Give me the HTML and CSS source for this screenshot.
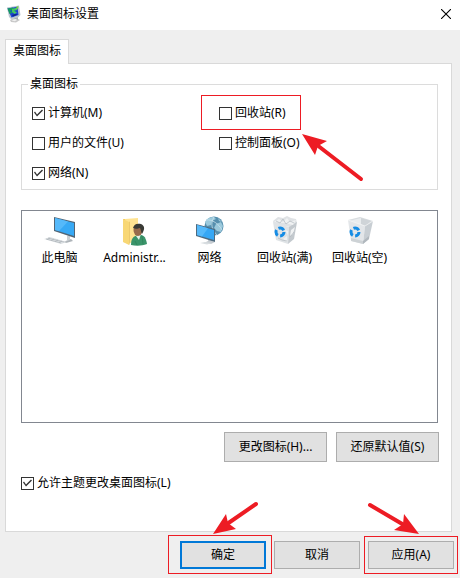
FILE: index.html
```html
<!DOCTYPE html>
<html lang="zh-CN">
<head>
<meta charset="utf-8">
<meta name="viewport" content="width=device-width, initial-scale=1">
<title>桌面图标设置</title>
<link rel="stylesheet" href="styles.css">
</head>
<body>
<main class="dialog">
  <header class="titlebar">
    <svg class="app-icon" viewBox="0 0 16 18" aria-hidden="true">
      <path d="M4 15l5-3 5 3-4 2.500-5-.5z" fill="#c9c9c9"/>
      <path d="M8 12l4-1v4l-3 .5z" fill="#a9adb2"/>
      <path d="M1 2.500L13 .5 14.500 10 12 12.500 5 14 3 12z" fill="#b9c4d0"/>
      <path d="M1.500 3.500l10-1.700L12.500 10l-7 2.500z" fill="#1b43d2"/>
      <path d="M1.500 3.500l5.500-1 1 2-4 1.500L7 7.500 3.500 9z" fill="#159b62"/>
      <path d="M6 4l5.500-1.500-.5 2.500-3 .8 3 1.700-2.500 1.500L6 7z" fill="#43c85f"/>
      <path d="M6 10l3-1 3 .5-5 2z" fill="#102488"/>
      <path d="M10.500 1.500l2-.3-.3 2.300-1.700.5z" fill="#7dd742"/>
      <path d="M5.500 15.200l4-1.200 2 1-3 1.300z" fill="#f1f1f1"/>
    </svg>
    <h1 class="title">桌面图标设置</h1>
    <button class="close" type="button" aria-label="关闭">
      <svg viewBox="0 0 10 10" aria-hidden="true"><path d="M0 0L10 10M10 0L0 10" stroke="#000" stroke-width="1.100"/></svg>
    </button>
  </header>

  <form class="body">
    <div class="tabs" role="tablist">
      <button class="tab" type="button" role="tab" aria-selected="true">桌面图标</button>
    </div>

    <section class="panel">
      <fieldset class="group">
        <legend>桌面图标</legend>
        <div class="options">
          <label class="check"><input type="checkbox" checked>计算机(M)</label>
          <label class="check marked"><input type="checkbox">回收站(R)
            <svg class="arrow arrow-recycle" viewBox="0 0 62 48" aria-hidden="true">
              <path d="M15 11L59 45" stroke="#ed1c24" stroke-width="4" stroke-linecap="round"/>
              <path d="M0 0L25 7L16 12L13 21Z" fill="#ed1c24"/>
            </svg>
          </label>
          <label class="check"><input type="checkbox">用户的文件(U)</label>
          <label class="check"><input type="checkbox">控制面板(O)</label>
          <label class="check"><input type="checkbox" checked>网络(N)</label>
        </div>
      </fieldset>

      <ul class="icons">
        <li class="item">
          <svg viewBox="0 0 32 32" aria-hidden="true">
            <path d="M19 26l8-3 2 2-7 2z" fill="#aeb4b9"/>
            <path d="M23 20l3-1v5l-3 1z" fill="#cbd0d4"/>
            <path d="M10 1l21 5v16L10 15z" fill="#526575"/>
            <path d="M11 2l19 5v13L11 14z" fill="#37a9f5"/>
            <path d="M11 2l13 3.500L15 15l-4-1z" fill="#55b9fa"/>
            <path d="M0 23l6-2 17 5-6 2z" fill="#dde1e4"/>
            <path d="M2 23l15 4M4 22l16 4M6 22l-3 1.500M10 23l-3 1.500M14 24l-3 1.500M18 25l-3 1.500" stroke="#a9b0b5" stroke-width=".6"/>
          </svg>
          <span>此电脑</span>
        </li>
        <li class="item">
          <svg viewBox="0 0 32 32" aria-hidden="true">
            <path d="M4 3h15v23H4z" fill="#f5ca59"/>
            <path d="M6 3l13-1v23l-8 2-7-1z" fill="#ffe391"/>
            <path d="M4 3l6 3v23l-6-3z" fill="#f8d775"/>
            <path d="M10 6l.6-.6V28l-.6 1z" fill="#e0b756"/>
            <path d="M12 29c0-6 2-9 7-10 6-1 8 3 9 9-5 2-11 2-16 1z" fill="#3a946a"/>
            <path d="M17 20l3 4 2-6z" fill="#e5f3e9"/>
            <path d="M16 25l2 4M23 20l1 8" stroke="#2d8058" stroke-width=".7"/>
            <ellipse cx="19" cy="14" rx="4.500" ry="6" fill="#986b4c"/>
            <path d="M14 12c1-4 4-5 8-4 4 2 4 5 1 10-1-2-1-4-2-6-3 1-4 1-7 0z" fill="#393a35"/>
          </svg>
          <span>Administr...</span>
        </li>
        <li class="item">
          <svg viewBox="0 0 32 32" aria-hidden="true">
            <circle cx="20" cy="10" r="9.500" fill="#568fae"/>
            <path d="M11 6c2-4 5-5 9-5l2 2-4 2-1 4-4 1zM22 8l5-2 2 4-2 6-4-1-3-3zM24 2l4 4-3-1z" fill="#9bc9dc"/>
            <path d="M12 4c6-1 13 4 16 10M20 1c-4 7-2 13 3 18" stroke="#d1e8f0" stroke-width=".7"/>
            <path d="M14 21h4v4l3 1-4 2-7-1 4-2z" fill="#c5cbd0"/>
            <path d="M2 8l19 5v13L2 20z" fill="#4e6b80"/>
            <path d="M3 9l17 5v10L3 19z" fill="#35a7f5"/>
            <path d="M3 9l11 3.200L8 20.500 3 19z" fill="#55b9fa"/>
            <path d="M6 27l5-1 7 1-5 1.500z" fill="#d8dde0"/>
          </svg>
          <span>网络</span>
        </li>
        <li class="item">
          <svg viewBox="0 0 32 32" aria-hidden="true">
            <path d="M4 5l5-4 5 1 4-2 4 2 5 1 1 4-7 4L5 8z" fill="#dfe2e5"/>
            <path d="M4 6l16 5-1 17-12-4z" fill="#dfe3e6"/>
            <path d="M20 11l8-5-3 17-6 5z" fill="#c3c9ce"/>
            <path d="M5 6l5-3 4 3 4-4 3 4 6-2-3 5-8-2zM16 14l3 1v4zM22 14l4-3-2 7-3 2zM14 23l4-3v6z" fill="#f0f2f3"/>
            <path d="M7 5l4 2 3-4 3 5 4-3 4 2M9 22l4 2 5 1M21 21l4-5" stroke="#b2b9be" stroke-width=".7"/>
            <circle class="recycle" cx="11" cy="16" r="4"/>
          </svg>
          <span>回收站(满)</span>
        </li>
        <li class="item">
          <svg viewBox="0 0 32 32" aria-hidden="true">
            <path d="M4 4l12-3 13 4-8 6z" fill="#d9dde0"/>
            <path d="M5 5l12-3v6l4 2z" fill="#e9ecee"/>
            <path d="M17 2l10 3-6 5-4-2z" fill="#cfd4d8"/>
            <path d="M4 4l17 6-2 18L7 25z" fill="#e3e6e9"/>
            <path d="M21 10l8-5-4 18-6 5z" fill="#c8ced3"/>
            <path d="M7 22l12 3v3L7 25z" fill="#cdd2d5"/>
            <path d="M19 25l6-5v3l-6 5z" fill="#b1b8be"/>
            <path d="M4 4l17 6 8-5" stroke="#f5f6f7" stroke-width=".7"/>
            <circle class="recycle" cx="11" cy="16" r="4"/>
          </svg>
          <span>回收站(空)</span>
        </li>
      </ul>

      <div class="actions">
        <button class="btn wide" type="button">更改图标(H)...</button>
        <button class="btn wide" type="button">还原默认值(S)</button>
      </div>

      <label class="check"><input type="checkbox" checked>允许主题更改桌面图标(L)</label>
    </section>
  </form>

  <footer class="footer">
    <div class="marked">
      <button class="btn primary" type="button">确定</button>
      <svg class="arrow arrow-ok" viewBox="0 0 48 34" aria-hidden="true">
        <path d="M14 23L43 3" stroke="#ed1c24" stroke-width="4" stroke-linecap="round"/>
        <path d="M0 33L13 13L15 22L23 28Z" fill="#ed1c24"/>
      </svg>
    </div>
    <button class="btn" type="button">取消</button>
    <div class="marked marked-apply">
      <button class="btn" type="button">应用(A)</button>
      <svg class="arrow arrow-apply" viewBox="0 0 54 34" aria-hidden="true">
        <path d="M4 4L38 24" stroke="#ed1c24" stroke-width="4" stroke-linecap="round"/>
        <path d="M53 33L38 13L37 23L28 29Z" fill="#ed1c24"/>
      </svg>
    </div>
  </footer>
</main>
</body>
</html>
```

FILE: styles.css
```css
*,
*::before,
*::after {
  box-sizing: border-box;
}

body {
  margin: 0;
  background: #efefef;
  color: #000;
  font: 12px/18px "Noto Sans", "Noto Sans CJK SC", sans-serif;
}

button,
input {
  font: inherit;
  color: inherit;
}

svg {
  display: block;
  fill: none;
}

.dialog {
  display: flex;
  flex-direction: column;
  min-height: 100vh;
}

/* Title bar */
.titlebar {
  display: flex;
  align-items: center;
  gap: 5px;
  height: 30px;
  padding: 0 9px 2px 6px;
  background: #fff;
}

.app-icon {
  width: 16px;
  height: 18px;
}

.title {
  flex: 1;
  margin: 0;
  font-size: 12px;
  font-weight: 400;
}

.close {
  padding: 0;
  border: 0;
  background: none;
}

.close svg {
  width: 10px;
  height: 10px;
}

/* Tab and its page */
.body {
  padding: 9px 8px 0 5px;
}

.tabs {
  display: flex;
}

.tab {
  position: relative;
  z-index: 1;
  height: 25px;
  margin-bottom: -1px;
  padding: 0 7px 2px;
  border: 1px solid #d9d9d9;
  border-bottom: 0;
  background: #fff;
}

.panel {
  display: flex;
  flex-direction: column;
  padding: 11px 13px 39px 15px;
  border: 1px solid #d9d9d9;
  background: #fff;
}

.group {
  min-width: 0;
  margin: 0 0 20px;
  padding: 10px 10px 1px;
  border: 1px solid #dcdcdc;
}

.group legend {
  margin-left: -4px;
  padding: 0 2px;
}

.options {
  display: grid;
  grid-template-columns: 187fr 208fr;
  grid-auto-rows: 30px;
  margin-top: -5px;
}

.check {
  display: flex;
  align-items: center;
  gap: 3px;
}

.check input {
  appearance: none;
  width: 13px;
  height: 13px;
  margin: 0;
  border: 1px solid #333;
  background: #fff;
}

.check input:checked::before {
  content: "";
  display: block;
  width: 11px;
  height: 11px;
  background: #333;
  clip-path: polygon(1px 5px, 2px 4px, 4px 7px, 9px 2px, 10px 3px, 4px 9px);
}

/* Icon list */
.icons {
  display: flex;
  height: 213px;
  margin: 0 0 9px;
  padding: 5px 0 0;
  border: 1px solid #828790;
  list-style: none;
}

.item {
  display: flex;
  flex-direction: column;
  align-items: center;
  gap: 1px;
  width: 75px;
}

.item svg {
  width: 32px;
  height: 32px;
}

.recycle {
  stroke: #168ce4;
  stroke-width: 3;
  stroke-dasharray: 6 2.38;
}

/* Buttons */
.actions {
  display: flex;
  justify-content: flex-end;
  gap: 9px;
  margin: 0 -1px 12px 0;
}

.btn {
  width: 86px;
  height: 28px;
  padding: 0;
  border: 1px solid #adadad;
  background: #e1e1e1;
}

.btn.wide {
  width: 103px;
  height: 30px;
}

.btn.primary {
  border: 2px solid #0078d7;
}

.footer {
  display: flex;
  justify-content: flex-end;
  gap: 8px;
  padding: 9px 6px 9px 0;
}

/* Red call-outs drawn over the controls */
.marked {
  position: relative;
}

.marked::after {
  content: "";
  position: absolute;
  border: 1px solid #ed1c24;
  pointer-events: none;
}

.check.marked::after {
  inset: -3px auto -2px -18px;
  width: 100px;
}

.footer .marked::after {
  inset: -6px -6px -5px -12px;
}

.footer .marked-apply::after {
  inset: -5px -4px -5px -4px;
}

.arrow {
  position: absolute;
  pointer-events: none;
}

.arrow-recycle {
  top: 36px;
  left: 83px;
  width: 62px;
  height: 48px;
}

.arrow-ok {
  bottom: 34px;
  left: 33px;
  width: 48px;
  height: 34px;
}

.arrow-apply {
  right: 34px;
  bottom: 34px;
  width: 54px;
  height: 34px;
}
```
